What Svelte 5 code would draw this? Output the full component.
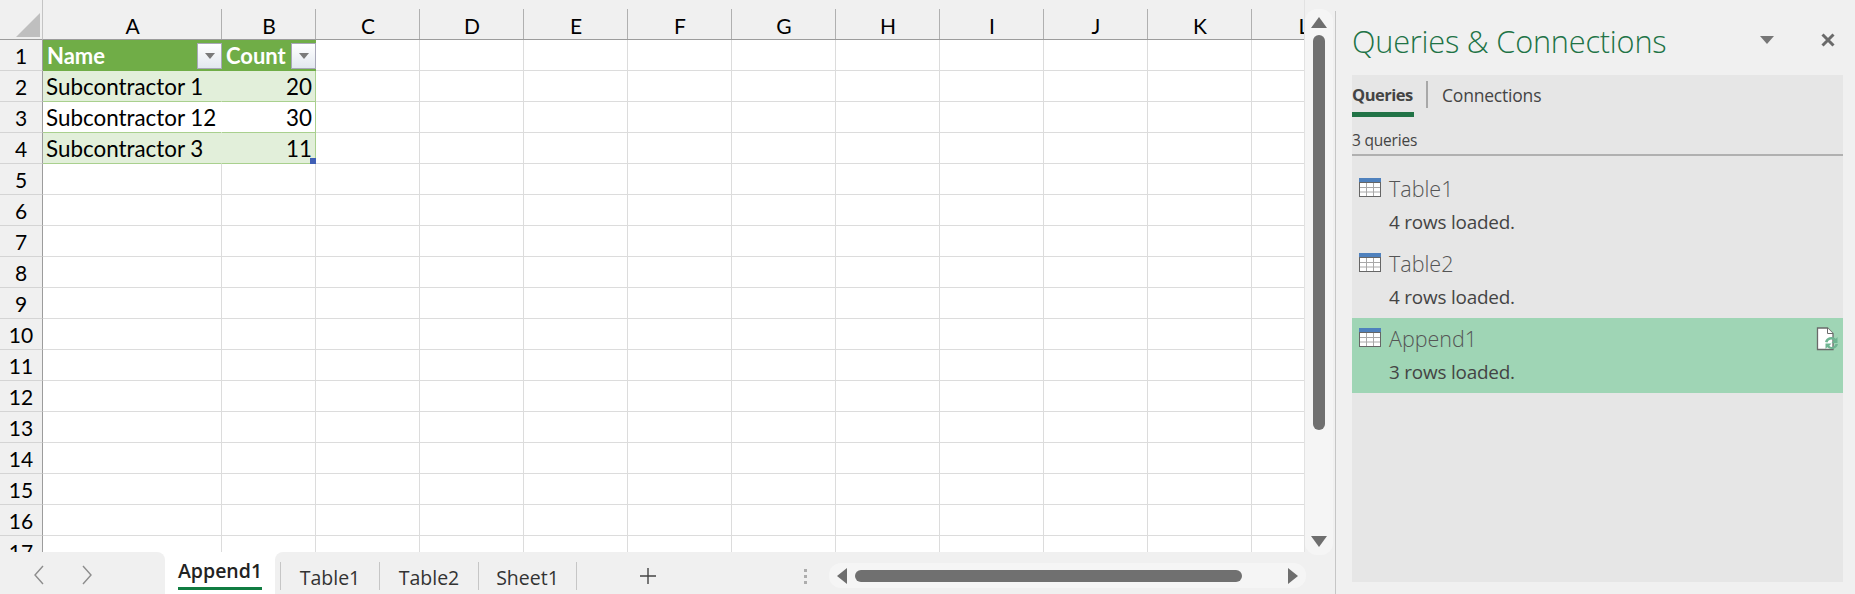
<script lang="ts">
	const columns = ['A', 'B', 'C', 'D', 'E', 'F', 'G', 'H', 'I', 'J', 'K', 'L']
	const rowNumbers = Array.from({ length: 17 }, (_, i) => i + 1)

	const tableRows = [
		{ name: 'Subcontractor 1', count: 20, band: true },
		{ name: 'Subcontractor 12', count: 30, band: false },
		{ name: 'Subcontractor 3', count: 11, band: true }
	]

	const sheets = ['Table1', 'Table2', 'Sheet1']

	const queries = [
		{ name: 'Table1', status: '4 rows loaded.', selected: false },
		{ name: 'Table2', status: '4 rows loaded.', selected: false },
		{ name: 'Append1', status: '3 rows loaded.', selected: true }
	]
</script>

<!-- MARKUP -------------------------------------------- -->
<div class="app">
	<div class="workbook">
		<div class="sheet-row">
			<div class="sheet">
				<div class="grid">
					<div class="corner">
						<svg width="24" height="24" viewBox="0 0 24 24"><path d="M0 24 L24 0 V24 Z" fill="#bfbfbf" /></svg>
					</div>
					{#each columns as col}
						<div class="col-head">{col}</div>
					{/each}

					{#each rowNumbers as n}
						<div class="row-head">{n}</div>
						{#each columns as col, c}
							{#if n === 1 && c < 2}
								<div class="cell table-head">
									<span>{c === 0 ? 'Name' : 'Count'}</span>
									<button class="filter" aria-label="Filter">
										<svg width="10" height="6" viewBox="0 0 10 6"><path d="M0 0 H10 L5 6 Z" fill="#7a7a7a" /></svg>
									</button>
								</div>
							{:else if n >= 2 && n <= 4 && c < 2}
								<div class={['cell', 'table-cell', tableRows[n - 2].band && 'band', c === 1 && 'num']}>
									{c === 0 ? tableRows[n - 2].name : tableRows[n - 2].count}
									{#if n === 4 && c === 1}<i class="handle"></i>{/if}
								</div>
							{:else}
								<div class="cell"></div>
							{/if}
						{/each}
					{/each}
				</div>
			</div>

			<div class="vscroll">
				<svg class="v-up" width="16" height="11" viewBox="0 0 16 11"><path d="M8 0 L16 11 H0 Z" fill="#6e6e6e" /></svg>
				<div class="v-thumb"></div>
				<svg class="v-down" width="16" height="11" viewBox="0 0 16 11"><path d="M0 0 H16 L8 11 Z" fill="#6e6e6e" /></svg>
			</div>
		</div>

		<div class="tabbar">
			<div class="nav">
				<svg width="12" height="20" viewBox="0 0 12 20"><path d="M10 1 L2 10 L10 19" fill="none" stroke="#8c8c8c" stroke-width="1.4" /></svg>
				<svg width="12" height="20" viewBox="0 0 12 20"><path d="M2 1 L10 10 L2 19" fill="none" stroke="#8c8c8c" stroke-width="1.4" /></svg>
			</div>
			<div class="tab-active"><span>Append1</span></div>
			<div class="tabs-rest">
				{#each sheets as sheet}
					<div class="tab">{sheet}</div>
				{/each}
				<div class="add">
					<svg width="18" height="18" viewBox="0 0 18 18"><path d="M9 1 V17 M1 9 H17" stroke="#444" stroke-width="1.4" /></svg>
				</div>
				<div class="dots"><i></i><i></i><i></i></div>
				<div class="hscroll">
					<svg width="10" height="16" viewBox="0 0 10 16"><path d="M10 0 V16 L0 8 Z" fill="#6e6e6e" /></svg>
					<div class="h-thumb"></div>
					<svg width="10" height="16" viewBox="0 0 10 16"><path d="M0 0 V16 L10 8 Z" fill="#6e6e6e" /></svg>
				</div>
			</div>
		</div>
	</div>

	<aside class="panel">
		<header class="panel-head">
			<h1>Queries &amp; Connections</h1>
			<svg class="caret" width="14" height="8" viewBox="0 0 14 8"><path d="M0 0 H14 L7 8 Z" fill="#767676" /></svg>
			<svg class="close" width="14" height="14" viewBox="0 0 14 14"><path d="M1.5 1.5 L12.5 12.5 M12.5 1.5 L1.5 12.5" stroke="#6a6a6a" stroke-width="3" /></svg>
		</header>

		<div class="panel-body">
			<div class="panel-tabs">
				<div class="ptab active">Queries</div>
				<div class="ptab-sep"></div>
				<div class="ptab">Connections</div>
			</div>
			<div class="count">3 queries</div>

			<ul class="list">
				{#each queries as q}
					<li class={['query', q.selected && 'selected']}>
						<svg class="table-icon" width="22" height="19" viewBox="0 0 22 19">
							<rect x="0" y="0" width="22" height="5" fill="#4f81bd" />
							<rect x="0.5" y="4.5" width="21" height="14" fill="#fff" stroke="#666" />
							<path d="M7.5 5 V18 M14.5 5 V18 M1 9.5 H21 M1 14 H21" stroke="#a8a8a8" />
						</svg>
						<div class="q-text">
							<div class="q-name">{q.name}</div>
							<div class="q-status">{q.status}</div>
						</div>
						{#if q.selected}
							<svg class="refresh" width="27" height="25" viewBox="0 0 27 25">
								<path d="M1.5 1 H11.5 L17 6.5 V22.5 H1.5 Z" fill="#fff" stroke="#6a6a6a" stroke-width="1.3" />
								<path d="M11.5 1 V6.5 H17" fill="#fff" stroke="#6a6a6a" stroke-width="1" />
								<path d="M9 15 A6.5 6.5 0 0 1 19.8 11.7 L21.5 10 V16 H15.5 L17.7 13.8 A3.6 3.6 0 0 0 11.5 15.5 Z" fill="#6fb592" />
								<path d="M22 17 A6.5 6.5 0 0 1 11.2 20.3 L9.5 22 V16.5 H15.5 L13.3 18.7 A3.6 3.6 0 0 0 19.5 17 Z" fill="#6fb592" />
							</svg>
						{/if}
					</li>
				{/each}
			</ul>
		</div>
	</aside>
</div>

<!-- CSS ----------------------------------------------- -->
<style>
	:global(body) {
		background: #f0f0f0;
		overflow: hidden;
	}

	:global(*) {
		box-sizing: border-box;
	}

	.app {
		--clr-green: #217346;
		width: 1855px;
		height: 594px;
		display: flex;
		overflow: hidden;
		font-family: Lato, 'Open Sans', sans-serif;
	}

	/* WORKBOOK ---------------------------------------------- */
	.workbook {
		width: 1335px;
		display: flex;
		flex-direction: column;
	}

	.sheet-row {
		height: 552px;
		display: flex;
	}

	.sheet {
		width: 1305px;
		overflow: hidden;
		background: #fff;
		border-right: 1px solid #e2e2e2;
	}

	.grid {
		display: grid;
		grid-template-columns: 43px 179px 94px repeat(9, 104px) 104px;
		grid-auto-rows: 31px;
		grid-template-rows: 40px;
		font-size: 20px;
		color: #000;
	}

	.corner {
		padding: 13px 0 0 16px;
		background: #f0f0f0;
		border-right: 1px solid #c4c4c4;
		border-bottom: 1px solid #9c9c9c;
	}

	.corner svg {
		display: block;
	}

	.col-head {
		display: flex;
		justify-content: center;
		align-items: center;
		padding-top: 12px;
		background: #f0f0f0;
		background-image: linear-gradient(#b0b0b0, #b0b0b0);
		background-size: 1px 30px;
		background-position: right 9px;
		background-repeat: no-repeat;
		border-bottom: 1px solid #9c9c9c;
		font-size: 21px;
	}

	.row-head {
		display: flex;
		justify-content: center;
		align-items: center;
		background: #f0f0f0;
		border-right: 1px solid #9c9c9c;
		border-bottom: 1px solid #d4d4d4;
		font-size: 21px;
	}

	.cell {
		position: relative;
		display: flex;
		align-items: center;
		border-right: 1px solid #dcdcdc;
		border-bottom: 1px solid #dcdcdc;
		white-space: nowrap;
	}

	.table-head {
		padding: 1px 0 0 4px;
		background: #70ad47;
		border-color: #70ad47;
		color: #fff;
		font-weight: 700;
		font-size: 22px;
	}

	.filter {
		flex: none;
		width: 25px;
		height: 26px;
		margin: 0 -1px 0 auto;
		padding: 0;
		display: flex;
		justify-content: center;
		align-items: center;
		background: linear-gradient(#fff, #e3e8ef);
		border: 1px solid #a8a8b8;
	}

	.table-cell {
		padding: 1px 3px 0;
		border-right-color: transparent;
		border-bottom-color: #a9d08e;
		font-size: 22.4px;
	}

	.table-cell.band {
		background: #e2efda;
	}

	.table-cell.num {
		justify-content: flex-end;
		border-right-color: #a9d08e;
	}

	.handle {
		position: absolute;
		right: -1px;
		bottom: -1px;
		width: 6px;
		height: 6px;
		background: #3f5fb5;
	}

	/* VERTICAL SCROLLBAR ------------------------------------ */
	.vscroll {
		position: relative;
		z-index: 1;
		flex: none;
		width: 28px;
		height: 546px;
		margin-top: 9px;
		display: flex;
		flex-direction: column;
		align-items: center;
		background: #f5f5f5;
		border-radius: 12px;
	}

	.v-up {
		margin-top: 8px;
	}

	.v-thumb {
		width: 12px;
		height: 395px;
		margin-top: 7px;
		background: #707070;
		border-radius: 6px;
	}

	.v-down {
		margin-top: auto;
		margin-bottom: 8px;
	}

	/* TAB BAR ----------------------------------------------- */
	.tabbar {
		height: 42px;
		display: flex;
		background: #fff;
		font-family: 'Open Sans', sans-serif;
	}

	.nav {
		width: 165px;
		padding: 13px 0 0 33px;
		display: flex;
		align-items: flex-start;
		gap: 36px;
		background: #f0f0f0;
		border-radius: 0 8px 0 0;
	}

	.tab-active {
		width: 110px;
		display: flex;
		justify-content: center;
		background: #fff;
		border-radius: 0 0 8px 8px;
		font-size: 19.5px;
		font-weight: 600;
		color: #222;
	}

	.tab-active span {
		height: 38px;
		padding: 6px 0 0;
		line-height: 26px;
		border-bottom: 3px solid #107c41;
	}

	.tabs-rest {
		flex: 1;
		padding: 10px 28px 4px 5px;
		display: flex;
		align-items: stretch;
		background: #f0f0f0;
		border-radius: 8px 0 0 0;
	}

	.tab {
		width: 99px;
		padding-top: 2px;
		display: flex;
		justify-content: center;
		align-items: center;
		border-left: 1px solid #c6c6c6;
		font-size: 19.5px;
		color: #333;
	}

	.tab:nth-child(3) {
		border-right: 1px solid #c6c6c6;
	}

	.add {
		margin-left: 62px;
		display: flex;
		align-items: center;
	}

	.dots {
		margin-left: 147px;
		display: flex;
		flex-direction: column;
		justify-content: center;
		gap: 3px;
	}

	.dots i {
		width: 3px;
		height: 3px;
		background: #adadad;
	}

	.hscroll {
		flex: none;
		width: 477px;
		height: 25px;
		margin: 1px 0 0 22px;
		padding: 0 8px;
		display: flex;
		align-items: center;
		background: #f5f5f5;
		border-radius: 12px;
	}

	.h-thumb {
		width: 387px;
		height: 12px;
		margin: 0 auto 0 8px;
		background: #707070;
		border-radius: 6px;
	}

	/* PANEL ------------------------------------------------- */
	.panel {
		flex: 1;
		margin-top: 11px;
		padding: 0 12px 12px 16px;
		display: flex;
		flex-direction: column;
		border-left: 1px solid #c6c6c6;
		font-family: 'Open Sans', sans-serif;
	}

	.panel-head {
		height: 64px;
		display: flex;
		align-items: center;
	}

	h1 {
		margin: 0 auto 4px 0;
		font-size: 30.7px;
		font-weight: 300;
		letter-spacing: -0.2px;
		color: var(--clr-green);
		white-space: nowrap;
	}

	.caret {
		margin: 0 47px 6px 0;
	}

	.close {
		margin: 0 8px 6px 0;
	}

	.panel-body {
		flex: 1;
		background: #e6e6e6;
	}

	.panel-tabs {
		height: 42px;
		display: flex;
		align-items: flex-start;
		font-size: 17.5px;
		color: #444;
	}

	.ptab {
		height: 42px;
		padding-top: 8px;
		letter-spacing: -0.2px;
	}

	.ptab.active {
		width: 62px;
		font-size: 16.5px;
		font-weight: 700;
		letter-spacing: -0.5px;
		white-space: nowrap;
		border-bottom: 5px solid var(--clr-green);
	}

	.ptab-sep {
		width: 2px;
		height: 27px;
		margin: 6px 14px 0 12px;
		background: #a8a8a8;
	}

	.count {
		height: 39px;
		padding-top: 12px;
		font-size: 15.5px;
		letter-spacing: -0.2px;
		color: #444;
		border-bottom: 2px solid #b0b0b0;
	}

	.list {
		margin: 12px 0 0;
		padding: 0;
		list-style: none;
	}

	.query {
		height: 75px;
		padding: 10px 5px 0 7px;
		display: flex;
		align-items: flex-start;
	}

	.query.selected {
		background: #9fd5b5;
	}

	.table-icon {
		flex: none;
	}

	.q-text {
		flex: 1;
		margin-left: 8px;
	}

	.q-name {
		margin-top: -4px;
		font-size: 21.5px;
		font-weight: 300;
		letter-spacing: 0;
		color: #555;
	}

	.q-status {
		margin-top: 6px;
		font-size: 18.9px;
		letter-spacing: -0.2px;
		color: #444;
	}

	.refresh {
		flex: none;
		margin: -1px -5px 0 0;
	}
</style>
